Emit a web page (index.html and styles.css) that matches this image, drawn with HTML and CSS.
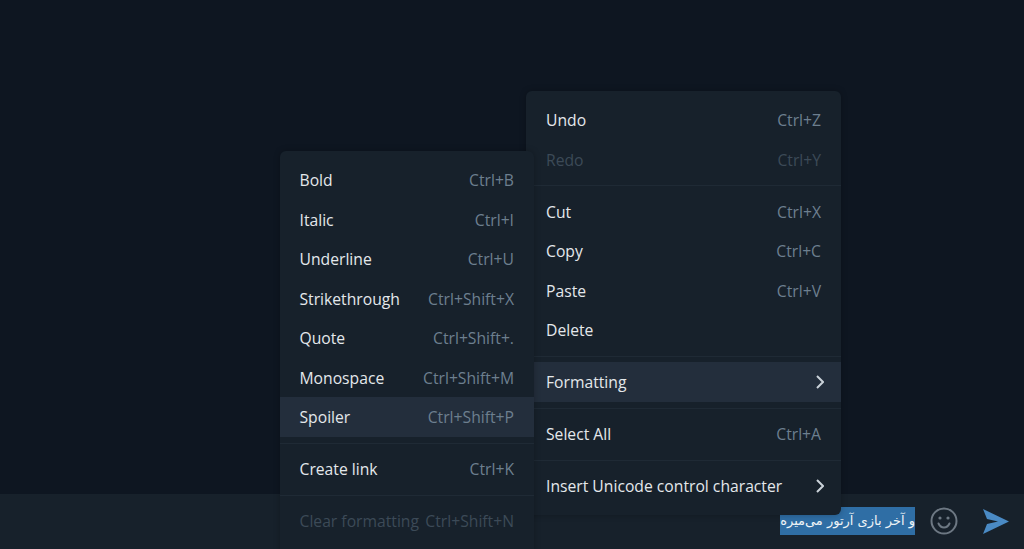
FILE: index.html
```html
<!DOCTYPE html>
<html lang="en">
<head>
<meta charset="UTF-8">
<title>Telegram</title>
<link rel="stylesheet" href="styles.css">
</head>
<body>

<div class="chat"></div>

<div class="composer">
  <div class="message" dir="rtl"><span class="selected">و آخر بازی آرتور می‌میره</span></div>
  <svg class="smile" width="28" height="28" viewBox="0 0 28 28" fill="none" stroke="#6d7883" stroke-width="2">
    <circle cx="14" cy="14" r="12.5"/>
    <path d="M8.5 16.5c1.2 2.6 3.1 4 5.5 4s4.300-1.400 5.500-4" stroke-linecap="round"/>
    <circle cx="10" cy="11" r="1.600" fill="#6d7883" stroke="none"/>
    <circle cx="18" cy="11" r="1.600" fill="#6d7883" stroke="none"/>
  </svg>
  <svg class="send" width="26" height="25" viewBox="0 0 26 25">
    <path d="M0 0 26 12.500 0 25 4 15 15 12.500 4 10Z" fill="#4a8ac4"/>
  </svg>
</div>

<div class="menu menu-main">
  <div class="item"><span>Undo</span><span class="key">Ctrl+Z</span></div>
  <div class="item disabled"><span>Redo</span><span class="key">Ctrl+Y</span></div>
  <div class="sep"></div>
  <div class="item"><span>Cut</span><span class="key">Ctrl+X</span></div>
  <div class="item"><span>Copy</span><span class="key">Ctrl+C</span></div>
  <div class="item"><span>Paste</span><span class="key">Ctrl+V</span></div>
  <div class="item"><span>Delete</span></div>
  <div class="sep"></div>
  <div class="item active"><span>Formatting</span>
    <svg class="arrow" width="8" height="14" viewBox="0 0 8 14" fill="none" stroke="#c9d1d8" stroke-width="2"><path d="M1 1l6 6-6 6"/></svg>
  </div>
  <div class="sep"></div>
  <div class="item"><span>Select All</span><span class="key">Ctrl+A</span></div>
  <div class="sep"></div>
  <div class="item"><span>Insert Unicode control character</span>
    <svg class="arrow" width="8" height="14" viewBox="0 0 8 14" fill="none" stroke="#c9d1d8" stroke-width="2"><path d="M1 1l6 6-6 6"/></svg>
  </div>
</div>

<div class="menu menu-format">
  <div class="item"><span>Bold</span><span class="key">Ctrl+B</span></div>
  <div class="item"><span>Italic</span><span class="key">Ctrl+I</span></div>
  <div class="item"><span>Underline</span><span class="key">Ctrl+U</span></div>
  <div class="item"><span>Strikethrough</span><span class="key">Ctrl+Shift+X</span></div>
  <div class="item"><span>Quote</span><span class="key">Ctrl+Shift+.</span></div>
  <div class="item"><span>Monospace</span><span class="key">Ctrl+Shift+M</span></div>
  <div class="item active"><span>Spoiler</span><span class="key">Ctrl+Shift+P</span></div>
  <div class="sep"></div>
  <div class="item"><span>Create link</span><span class="key">Ctrl+K</span></div>
  <div class="sep"></div>
  <div class="item disabled"><span>Clear formatting</span><span class="key">Ctrl+Shift+N</span></div>
</div>

</body>
</html>
```

FILE: styles.css
```css
html, body {
  height: 100%;
}
body {
  font-family: 'Open Sans', 'Noto Sans', sans-serif;
  font-size: 15.7px;
  background-color: #0e1621;
  margin: 0;
  color: #e4e8eb;
  display: flex;
  flex-direction: column;
  overflow: hidden;
}
.chat {
  flex: 1;
}
.composer {
  height: 55px;
  box-sizing: border-box;
  background-color: #17212b;
  display: flex;
  align-items: center;
  justify-content: flex-end;
  padding: 0 15px 1px 0;
}
.message {
  font-family: 'DejaVu Sans', sans-serif;
  font-size: 13px;
  margin-right: 15px;
  line-height: 28px;
}
.selected {
  display: block;
  width: 135px;
  background-color: #2f6ea5;
  color: #f0f4f7;
  white-space: nowrap;
}
.smile {
  margin-right: 25px;
}
.menu {
  position: absolute;
  background-color: #17212b;
  border-radius: 6px;
  box-shadow: 0 0 6px rgba(0, 0, 0, 0.25);
  padding: 9.25px 0 10px;
}
.menu-main {
  left: 526px;
  top: 91px;
  width: 315px;
  height: 405px;
}
.menu-format {
  left: 280px;
  top: 151px;
  width: 254px;
  height: 398px;
  padding-bottom: 0;
  border-radius: 6px 6px 0 0;
}
.item {
  height: 39.5px;
  padding: 0 20px 0 19.5px;
  display: flex;
  align-items: center;
  justify-content: space-between;
  white-space: nowrap;
}
.menu-main .item {
  padding-left: 20px;
}
.item.active {
  background-color: #232e3c;
}
.key {
  color: #6d7f8f;
}
.item.disabled,
.item.disabled .key {
  color: #3c4a57;
}
.sep {
  height: 1px;
  margin: 5.75px 0;
  background-color: #1f2a35;
}
.arrow {
  margin-right: -3px;
}
```
